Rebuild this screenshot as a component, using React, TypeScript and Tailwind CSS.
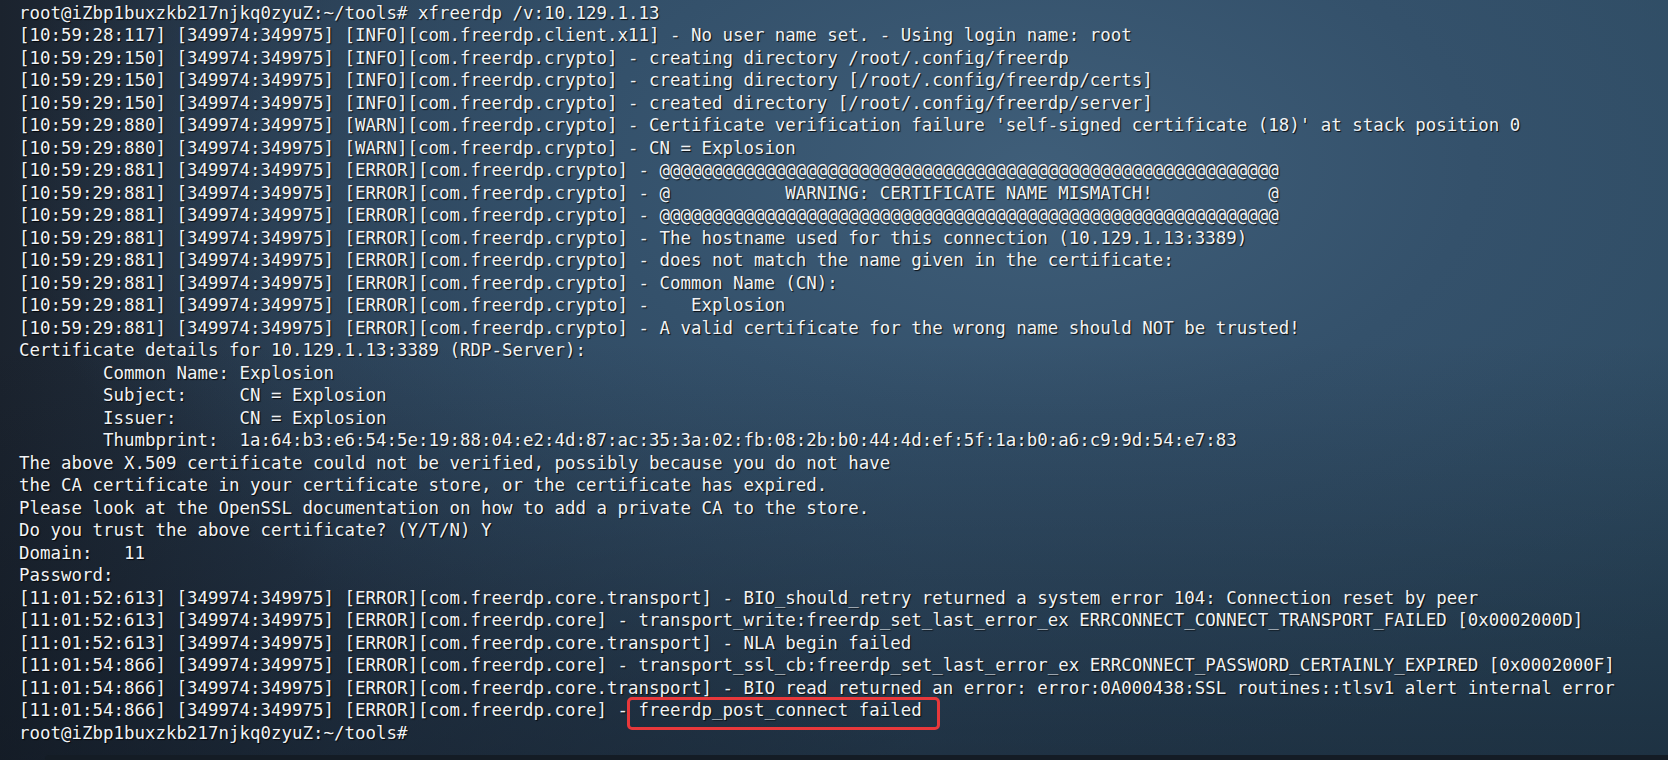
import React from 'react';

const lines: string[] = [
  'root@iZbp1buxzkb217njkq0zyuZ:~/tools# xfreerdp /v:10.129.1.13',
  '[10:59:28:117] [349974:349975] [INFO][com.freerdp.client.x11] - No user name set. - Using login name: root',
  '[10:59:29:150] [349974:349975] [INFO][com.freerdp.crypto] - creating directory /root/.config/freerdp',
  '[10:59:29:150] [349974:349975] [INFO][com.freerdp.crypto] - creating directory [/root/.config/freerdp/certs]',
  '[10:59:29:150] [349974:349975] [INFO][com.freerdp.crypto] - created directory [/root/.config/freerdp/server]',
  "[10:59:29:880] [349974:349975] [WARN][com.freerdp.crypto] - Certificate verification failure 'self-signed certificate (18)' at stack position 0",
  '[10:59:29:880] [349974:349975] [WARN][com.freerdp.crypto] - CN = Explosion',
  '[10:59:29:881] [349974:349975] [ERROR][com.freerdp.crypto] - @@@@@@@@@@@@@@@@@@@@@@@@@@@@@@@@@@@@@@@@@@@@@@@@@@@@@@@@@@@',
  '[10:59:29:881] [349974:349975] [ERROR][com.freerdp.crypto] - @           WARNING: CERTIFICATE NAME MISMATCH!           @',
  '[10:59:29:881] [349974:349975] [ERROR][com.freerdp.crypto] - @@@@@@@@@@@@@@@@@@@@@@@@@@@@@@@@@@@@@@@@@@@@@@@@@@@@@@@@@@@',
  '[10:59:29:881] [349974:349975] [ERROR][com.freerdp.crypto] - The hostname used for this connection (10.129.1.13:3389)',
  '[10:59:29:881] [349974:349975] [ERROR][com.freerdp.crypto] - does not match the name given in the certificate:',
  '[10:59:29:881] [349974:349975] [ERROR][com.freerdp.crypto] - Common Name (CN):',
  '[10:59:29:881] [349974:349975] [ERROR][com.freerdp.crypto] -    Explosion',
  '[10:59:29:881] [349974:349975] [ERROR][com.freerdp.crypto] - A valid certificate for the wrong name should NOT be trusted!',
  'Certificate details for 10.129.1.13:3389 (RDP-Server):',
  '        Common Name: Explosion',
  '        Subject:     CN = Explosion',
  '        Issuer:      CN = Explosion',
  '        Thumbprint:  1a:64:b3:e6:54:5e:19:88:04:e2:4d:87:ac:35:3a:02:fb:08:2b:b0:44:4d:ef:5f:1a:b0:a6:c9:9d:54:e7:83',
  'The above X.509 certificate could not be verified, possibly because you do not have',
  'the CA certificate in your certificate store, or the certificate has expired.',
  'Please look at the OpenSSL documentation on how to add a private CA to the store.',
  'Do you trust the above certificate? (Y/T/N) Y',
  'Domain:   11',
  'Password:',
  '[11:01:52:613] [349974:349975] [ERROR][com.freerdp.core.transport] - BIO_should_retry returned a system error 104: Connection reset by peer',
  '[11:01:52:613] [349974:349975] [ERROR][com.freerdp.core] - transport_write:freerdp_set_last_error_ex ERRCONNECT_CONNECT_TRANSPORT_FAILED [0x0002000D]',
  '[11:01:52:613] [349974:349975] [ERROR][com.freerdp.core.transport] - NLA begin failed',
  '[11:01:54:866] [349974:349975] [ERROR][com.freerdp.core] - transport_ssl_cb:freerdp_set_last_error_ex ERRCONNECT_PASSWORD_CERTAINLY_EXPIRED [0x0002000F]',
  '[11:01:54:866] [349974:349975] [ERROR][com.freerdp.core.transport] - BIO_read returned an error: error:0A000438:SSL routines::tlsv1 alert internal error',
];

const Terminal = () => {
  return (
    <div className="h-[760px] w-[1668px] overflow-hidden flex flex-col [background-image:linear-gradient(to_bottom,transparent_45%,rgba(12,20,30,0.45)_100%),radial-gradient(ellipse_at_62%_22%,#3f5e79_0%,#34516b_30%,transparent_70%),linear-gradient(to_right,#1b232e_0%,#26374a_20%,#2f4a62_55%,#2c4a60_100%)]">
      {/* terminal output */}
      <pre className="flex-1 pt-[1.5px] pl-[19px] font-['DejaVu_Sans_Mono',monospace] text-[17.44px] leading-[22.5px] text-[#f1f3f5] [text-shadow:1px_1px_1px_rgba(0,0,0,0.85)]">
        {lines.map((l, i) => (
          <div key={i}>{l}</div>
        ))}
        <div>
          {'[11:01:54:866] [349974:349975] [ERROR][com.freerdp.core] - '}
          <span className="relative">
            freerdp_post_connect failed
            <span className="absolute -left-[11px] -right-[18px] top-[-3px] bottom-[-10px] rounded-[5px] border-[3px] border-[#e8383b]" />
          </span>
        </div>
        <div>root@iZbp1buxzkb217njkq0zyuZ:~/tools#</div>
      </pre>
      <div className="h-[5px] ml-[45px] rounded-tl-[4px] bg-[#141c25]" />
    </div>
  );
};

export default Terminal;
